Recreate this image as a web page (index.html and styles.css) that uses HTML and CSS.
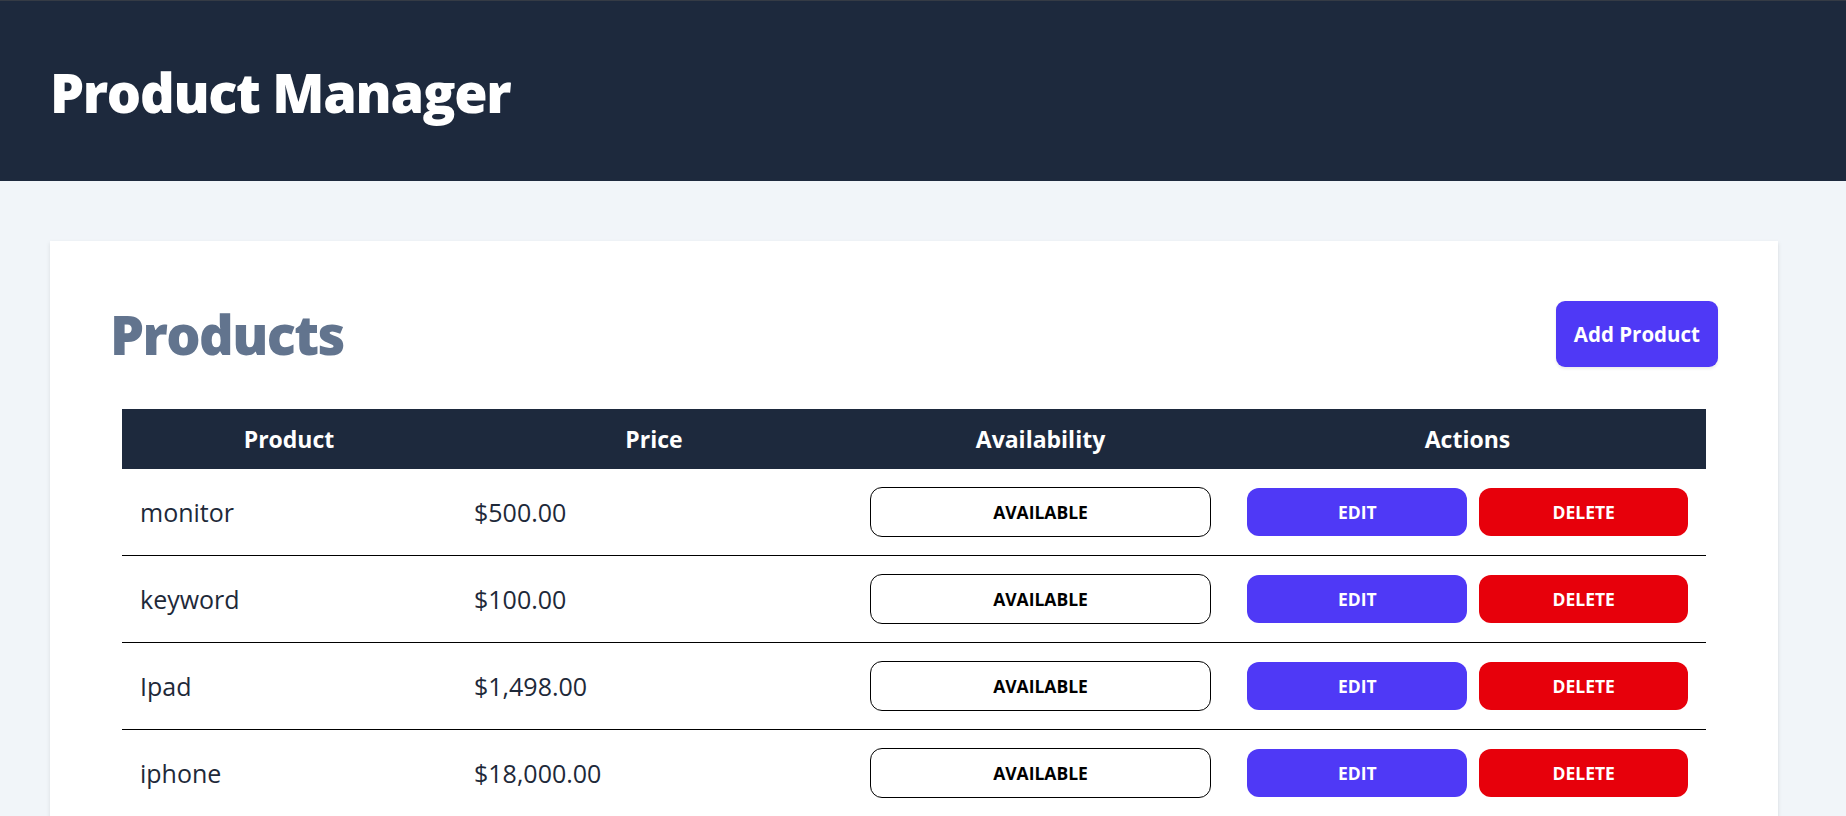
FILE: index.html
```html
<!DOCTYPE html>
<html lang="en">
<head>
<meta charset="utf-8">
<title>Product Manager</title>
<link rel="stylesheet" href="styles.css">
</head>
<body>
<header class="topbar">
  <div class="container">
    <h1 class="app-title">Product Manager</h1>
  </div>
</header>
<main class="container main">
  <section class="card">
    <div class="card-head">
      <h2 class="page-title">Products</h2>
      <button class="btn-add">Add Product</button>
    </div>
    <div class="table-wrap">
      <table class="products">
        <colgroup>
          <col class="c1"><col class="c2"><col class="c3"><col class="c4">
        </colgroup>
        <thead>
          <tr><th>Product</th><th>Price</th><th>Availability</th><th>Actions</th></tr>
        </thead>
        <tbody>
          <tr>
            <td>monitor</td><td>$500.00</td>
            <td><button class="avail">AVAILABLE</button></td>
            <td><div class="actions"><button class="btn-edit">EDIT</button><button class="btn-del">DELETE</button></div></td>
          </tr>
          <tr>
            <td>keyword</td><td>$100.00</td>
            <td><button class="avail">AVAILABLE</button></td>
            <td><div class="actions"><button class="btn-edit">EDIT</button><button class="btn-del">DELETE</button></div></td>
          </tr>
          <tr>
            <td>Ipad</td><td>$1,498.00</td>
            <td><button class="avail">AVAILABLE</button></td>
            <td><div class="actions"><button class="btn-edit">EDIT</button><button class="btn-del">DELETE</button></div></td>
          </tr>
          <tr>
            <td>iphone</td><td>$18,000.00</td>
            <td><button class="avail">AVAILABLE</button></td>
            <td><div class="actions"><button class="btn-edit">EDIT</button><button class="btn-del">DELETE</button></div></td>
          </tr>
        </tbody>
      </table>
    </div>
  </section>
</main>
</body>
</html>
```
FILE: styles.css
```css
* { box-sizing: border-box; }
html, body { margin: 0; padding: 0; }
html { overflow: hidden; }
body {
  background: #f1f5f9;
  font-family: "Open Sans", "Noto Sans", sans-serif;
  color: #000;
}
.container {
  width: 1728px;
  margin-left: 50px;
}
.topbar {
  background: #1d293d;
  border-top: 1px solid #353b45;
}
.topbar .container {
  padding: 59px 0 61px;
}
.app-title {
  margin: 0;
  font-size: 54px;
  line-height: 60px;
  font-weight: 800;
  color: #fff;
  letter-spacing: -1.3px;
  position: relative;
  top: 2px;
}
.main { padding-top: 60px; }
.card {
  background: #fff;
  padding: 60px;
  box-shadow: 0 1.5px 4.5px 0 rgba(0,0,0,0.1), 0 1.5px 3px -1.5px rgba(0,0,0,0.1);
  min-height: 700px;
}
.card-head {
  display: flex;
  justify-content: space-between;
  align-items: center;
}
.page-title {
  margin: 0;
  font-size: 54px;
  line-height: 60px;
  font-weight: 800;
  color: #62748e;
  letter-spacing: -1.6px;
}
.btn-add {
  font-family: inherit;
  background: #4f39f6;
  color: #fff;
  border: 0;
  border-radius: 9px;
  padding: 18px;
  font-size: 20.5px;
  line-height: 30px;
  font-weight: 700;
  box-shadow: 0 1.5px 3px 0 rgba(0,0,0,0.08);
}
.table-wrap { padding: 42px 12px 0; }
.products {
  width: 100%;
  border-collapse: collapse;
  table-layout: fixed;
}
.c1 { width: 334px; }
.c2 { width: 396px; }
.c3 { width: 377px; }
.c4 { width: 477px; }
.products thead { background: #1d293d; color: #fff; }
.products th {
  padding: 12px;
  font-size: 23px;
  line-height: 36px;
  font-weight: 700;
  text-align: center;
}
.products tbody tr { border-bottom: 1px solid #000; }
.products td {
  padding: 18px;
  font-size: 25px;
  line-height: 42px;
  color: #1e2939;
  vertical-align: middle;
}
.avail, .btn-edit, .btn-del {
  font-family: inherit;
  display: block;
  width: 100%;
  font-size: 17.5px;
  line-height: 24px;
  font-weight: 700;
  text-transform: uppercase;
  text-align: center;
  border-radius: 12px;
  cursor: pointer;
}
.avail {
  background: #fff;
  color: #000;
  border: 1px solid #000;
  padding: 12px;
}
.actions {
  display: grid;
  grid-template-columns: 221fr 209fr;
  gap: 12px;
  align-items: center;
}
.btn-edit, .btn-del {
  border: 0;
  color: #fff;
  padding: 12px;
}
.btn-edit { background: #4f39f6; }
.btn-del { background: #e7000b; }
```
